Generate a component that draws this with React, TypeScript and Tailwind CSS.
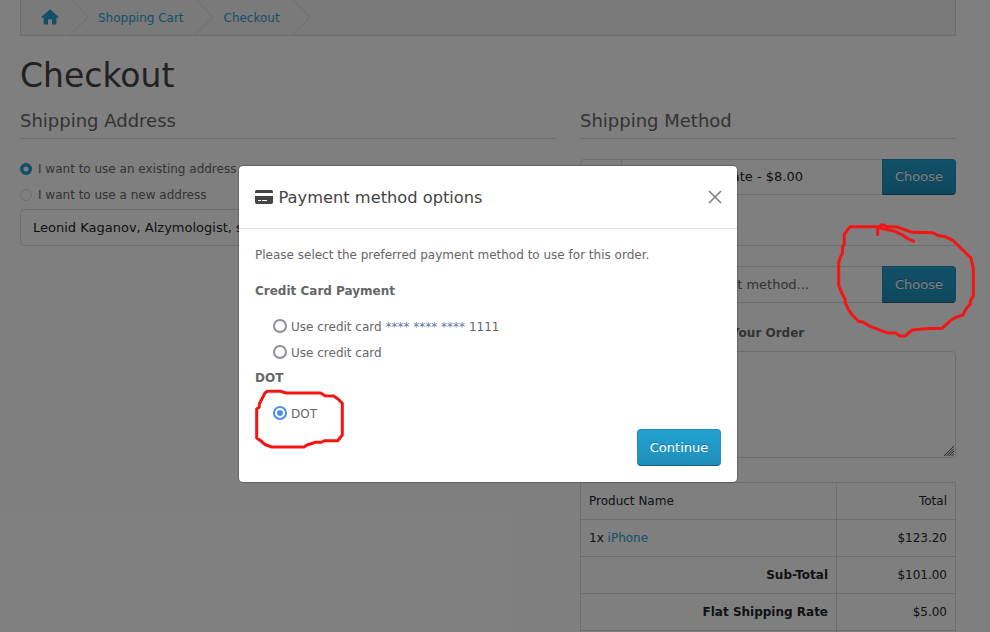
import type { ReactNode } from 'react';

function Crumb({ children, className }: { children: ReactNode; className: string }) {
  return (
    <li className={'flex h-[35px] shrink-0 items-center justify-between ' + className}>
      {children}
      <svg width="19" height="35" viewBox="0 0 19 35" fill="none" stroke="#e4e4e4" strokeWidth="1.2">
        <path d="M0.5 -1L18 17.2L0.5 34.5" />
      </svg>
    </li>
  );
}

function HouseIcon() {
  return (
    <svg className="mb-[2px]" width="18" height="16" viewBox="0 0 18 16" fill="currentColor">
      <path d="M8.500 0.700a1 1 0 0 1 1 0L17.200 7.400a0.700 0.700 0 0 1 -0.500 1.300H15.500V14.200a1.400 1.400 0 0 1 -1.400 1.300H11V11.200a0.900 0.900 0 0 0 -0.900 -0.900H7.900a0.900 0.900 0 0 0 -0.900 0.900V15.500H4a1.400 1.400 0 0 1 -1.400 -1.300V8.700H1.300a0.700 0.700 0 0 1 -0.500 -1.300Z" />
    </svg>
  );
}

function CardIcon() {
  return (
    <svg width="18" height="14" viewBox="0 0 18 14" fill="currentColor">
      <path d="M0 3V1.800A1.800 1.800 0 0 1 1.800 0H16.200A1.800 1.800 0 0 1 18 1.800V3Z" />
      <path
        fillRule="evenodd"
        d="M0 6H18V12.200A1.800 1.800 0 0 1 16.200 14H1.800A1.800 1.800 0 0 1 0 12.200ZM3 10V11H6V10ZM7 10V11H12V10Z"
      />
    </svg>
  );
}

function SectionTitle({ children }: { children: ReactNode }) {
  return (
    <h3 className="h-[30px] border-b border-[#ddd] text-[18px] leading-[24px] text-[#666]">{children}</h3>
  );
}

function MethodRow({ text, className, textClass }: { text: string; className: string; textClass: string }) {
  return (
    <div className={'flex w-[376px] ' + className}>
      <span className="w-[42px] rounded-l-[4px] border border-[#ddd]" />
      <div className={'flex flex-1 items-center justify-end border-y border-[#ddd] text-[13px] ' + textClass}>{text}</div>
      <button className="w-[74px] rounded-r-[4px] border border-[#1f90bb] border-b-[#145e7a] bg-linear-to-b from-[#23a1d1] to-[#1f90bb] text-[13px] text-white [text-shadow:0_-1px_0_rgba(0,0,0,0.25)]">
        Choose
      </button>
    </div>
  );
}

const totals = [
  { name: 'Sub-Total', total: '$101.00' },
  { name: 'Flat Shipping Rate', total: '$5.00' },
];

function ModalRadio({ checked = false, children }: { checked?: boolean; children: ReactNode }) {
  return (
    <label className="flex h-[26px] items-center gap-[4px] pl-[18px]">
      <span
        className={
          'flex h-[14px] w-[14px] items-center justify-center rounded-full border-2 ' +
          (checked ? 'border-[#4a90e2]' : 'border-[#8f8f9d]')
        }
      >
        {checked && <span className="h-[6px] w-[6px] rounded-full bg-[#4a90e2]" />}
      </span>
      <span className="pt-px">{children}</span>
    </label>
  );
}

function Modal() {
  return (
    <section className="absolute left-[238px] top-[165px] h-[318px] w-[500px] rounded-[5px] border border-black/20 bg-white bg-clip-padding text-[#666]">
      <header className="flex h-[63px] items-center border-b border-[#dee2e6] px-4 text-[16.25px] text-[#444]">
        <CardIcon />
        <h5 className="ml-[5.500px] pt-[2px]">Payment method options</h5>
        <svg className="ml-auto mr-[-1px]" width="14" height="14" viewBox="0 0 14 14" stroke="#7f7f7f" strokeWidth="1.6">
          <path d="M1 1L13 13M13 1L1 13" />
        </svg>
      </header>
      <div className="px-4 leading-[18px]">
        <p className="pt-[17px]">Please select the preferred payment method to use for this order.</p>
        <p className="pt-[18px] font-bold">Credit Card Payment</p>
        <div className="pt-[13px]">
          <ModalRadio>
            Use credit card <span className="text-[#667a9c]">**** **** ****</span> 1111
          </ModalRadio>
          <ModalRadio>Use credit card</ModalRadio>
        </div>
        <p className="pt-[4px] font-bold">DOT</p>
        <div className="pt-[13px]">
          <ModalRadio checked>DOT</ModalRadio>
        </div>
        <div className="flex justify-end pt-[3px]">
          <button className="h-[37px] w-[84px] rounded-[4px] border border-[#1f90bb] border-b-[#145e7a] bg-linear-to-b from-[#23a1d1] to-[#1f90bb] text-[13px] text-white [text-shadow:0_-1px_0_rgba(0,0,0,0.25)]">
            Continue
          </button>
        </div>
      </div>
    </section>
  );
}

export default function App() {
  return (
    <div className="relative h-[632px] w-[990px] overflow-hidden bg-white font-['DejaVu_Sans',sans-serif] text-[12px] text-[#666]">
      <main className="pl-5">
        <ul className="flex h-[36px] w-[936px] overflow-hidden border-x border-b border-[#ddd] bg-[#f5f5f5] text-[#23a1d1]">
          <Crumb className="w-[68px] pl-[20px]">
            <HouseIcon />
          </Crumb>
          <Crumb className="w-[125px] pl-[9px]">Shopping Cart</Crumb>
          <Crumb className="w-[97px] pl-[9.500px]">Checkout</Crumb>
        </ul>
        <h1 className="h-[73px] pt-[20px] text-[33px] leading-[40px] text-[#444]">Checkout</h1>
        <div className="flex gap-6">
          <div className="w-[536px]">
            <SectionTitle>Shipping Address</SectionTitle>
            <div className="mt-[17px] flex h-[26px] items-center gap-[6px]">
              <svg width="12" height="12" viewBox="0 0 12 12" fill="#fff" stroke="#23a1d1" strokeWidth="3.500">
                <circle cx="6" cy="6" r="4.250" />
              </svg>
              I want to use an existing address
            </div>
            <div className="flex h-[26px] items-center gap-[6px]">
              <span className="h-3 w-3 rounded-full border border-[#d9d9d9]" />
              I want to use a new address
            </div>
            <div className="mt-[1px] flex h-[37px] items-center rounded-[4px] border border-[#ddd] px-3 text-[13px] text-[#212529]">
              Leonid Kaganov, Alzymologist, street 1, Helsinki
            </div>
          </div>
          <div className="w-[376px]">
            <SectionTitle>Shipping Method</SectionTitle>
            <MethodRow className="mt-[20px] h-[36px]" textClass="pr-[79px] text-[#212529]" text="Flat Shipping Rate - $8.00" />
            <hr className="mt-[50px] border-[#ddd]" />
            <MethodRow className="mt-[20px] h-[37px]" textClass="pr-[73px] text-[#666]" text="Choose payment method..." />
            <p className="pt-[21px] font-bold leading-[18px]">Add Comments About Your Order</p>
            <div className="mt-[9px] flex h-[107px] items-end justify-end rounded-[4px] border border-[#ddd]">
              <svg className="mb-px mr-px" width="10" height="10" viewBox="0 0 10 10" stroke="#4a4a4a" strokeWidth="1">
                <path d="M0 10L10 0M2.500 10L10 2.500M5 10L10 5M7.500 10L10 7.500" />
              </svg>
            </div>
            <table className="mt-[24px] w-[376px] table-fixed border-collapse text-[#212529] [&_td]:h-[37px] [&_td]:border [&_td]:border-[#ddd] [&_td]:px-2">
              <colgroup>
                <col className="w-[256px]" />
                <col />
              </colgroup>
              <tbody>
                <tr>
                  <td>Product Name</td>
                  <td className="text-right">Total</td>
                </tr>
                <tr>
                  <td>
                    1x <span className="text-[#23a1d1]">iPhone</span>
                  </td>
                  <td className="text-right">$123.20</td>
                </tr>
                {totals.map((row) => (
                  <tr key={row.name} className="text-right">
                    <td className="font-bold">{row.name}</td>
                    <td>{row.total}</td>
                  </tr>
                ))}
                <tr>
                  <td />
                  <td />
                </tr>
              </tbody>
            </table>
          </div>
        </div>
      </main>
      <div className="absolute inset-0 bg-black/50" />
      <Modal />
      <svg
        className="absolute inset-0"
        width="990"
        height="632"
        viewBox="0 0 990 632"
        fill="none"
        stroke="#f51414"
        strokeWidth="3"
        strokeLinecap="round"
        strokeLinejoin="round"
      >
        <path d="M877.700 234.500V228.300L881 226.700H850.300L847.300 230L844.300 234.300V243.700L842.700 246.700L842.300 253.300L840 258L838.700 263V285.300L841.300 292.300L845 299L845.500 303L848.300 309.300L853 316L858.700 321.300L863.300 322.300L870 326.300L886.700 332.700L896 333L899.300 336H905L912.300 330L925 328.700L942 328.300L951 320L957.300 316.700L962.700 315.300L966 309L970.300 304V301L973.300 296V268.300L971 258L953.300 240.700L945 236.700L937.300 235.300L933.300 232.700L912.300 232.300L896.700 227L887 226.500L884 225L881 225L879.500 228L887 229.500L894.300 231L903.300 235.300L906 237.700L913.700 241.300" />
        <path d="M256.700 409V438L261 441L265 444.500L271.700 447H304L307 445L315.700 442.300H321.500L324.300 440.700H337.700L342.300 435V403.300L338 399L333.700 396L325 395.700L320.700 393H286L280.500 391.300H267.300L265 393L259.300 404V407Z" />
      </svg>
    </div>
  );
}
